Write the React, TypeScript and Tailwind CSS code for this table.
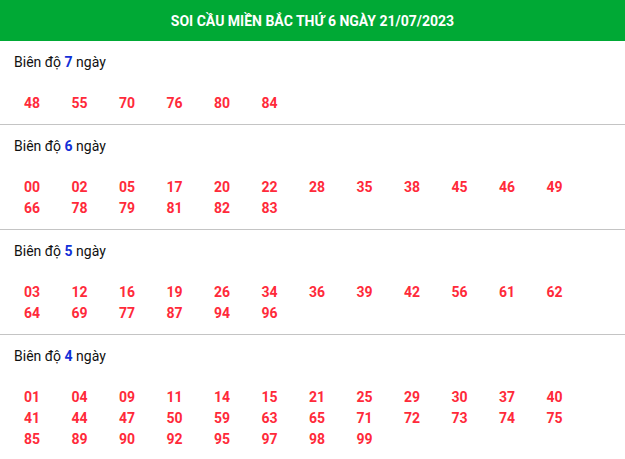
import React from "react";

const sections: { days: number; nums: string[] }[] = [
  { days: 7, nums: ["48", "55", "70", "76", "80", "84"] },
  {
    days: 6,
    nums: ["00", "02", "05", "17", "20", "22", "28", "35", "38", "45", "46", "49", "66", "78", "79", "81", "82", "83"],
  },
  {
    days: 5,
    nums: ["03", "12", "16", "19", "26", "34", "36", "39", "42", "56", "61", "62", "64", "69", "77", "87", "94", "96"],
  },
  {
    days: 4,
    nums: [
      "01", "04", "09", "11", "14", "15", "21", "25", "29", "30", "37", "40",
      "41", "44", "47", "50", "59", "63", "65", "71", "72", "73", "74", "75",
      "85", "89", "90", "92", "95", "97", "98", "99",
    ],
  },
];

export default function App() {
  return (
    <div className="w-[625px] bg-white" style={{ fontFamily: "Roboto, 'Liberation Sans', sans-serif" }}>
      <div className="h-[41px] bg-[#00a935] flex items-center justify-center">
        <h1 className="text-white font-bold text-[14px] leading-none">SOI CẦU MIỀN BẮC THỨ 6 NGÀY 21/07/2023</h1>
      </div>
      {sections.map((s, i) => (
        <div key={s.days} className={"pt-[11px] pb-[10px] " + (i < sections.length - 1 ? "border-b border-[#c4c4c4]" : "")}>
          <div className="pl-[14px] h-[20px] leading-[20px] text-[14px] text-[#111]">
            Biên độ <span className="font-bold text-[#1230d8]">{s.days}</span> ngày
          </div>
          <div className="mt-[21px] pl-[24px] grid grid-cols-[repeat(12,47.5px)]">
            {s.nums.map((n) => (
              <div key={n} className="h-[21px] leading-[21px] text-[14px] font-bold text-[#ff2a3a]">
                {n}
              </div>
            ))}
          </div>
        </div>
      ))}
    </div>
  );
}
